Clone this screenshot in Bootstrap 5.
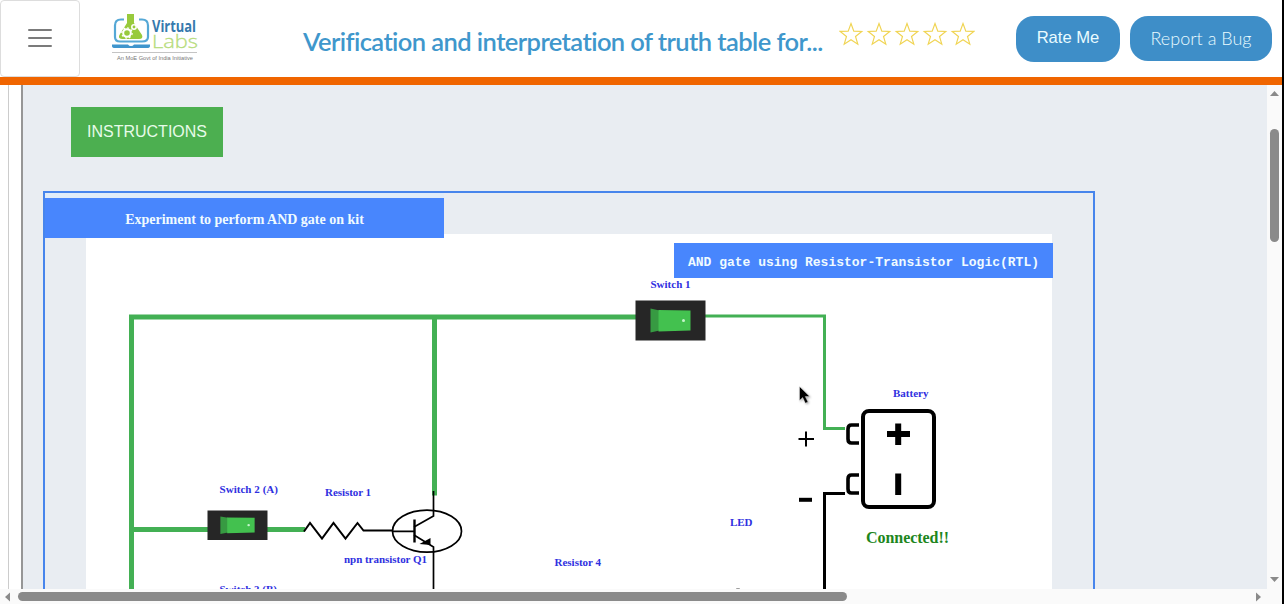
<!DOCTYPE html>
<html lang="en">
<head>
<meta charset="utf-8">
<title>Virtual Labs</title>
<link href="https://cdn.jsdelivr.net/npm/bootstrap@5.3.0/dist/css/bootstrap.min.css" rel="stylesheet">
<style>
body{font-family:"Liberation Sans",Arial,sans-serif;background:#000;height:604px}
.page{width:1282px;height:604px;background:#fff}
.topbar{height:85px;border-bottom:8px solid #f06500}
.menu-btn{width:80px;height:77px;border:1.5px solid #ddd;border-radius:4px;background:#fff}
.logo{width:90px;height:52px;margin-left:30px;margin-top:-2px}
.exp-title{font:600 25.5px "Lato",sans-serif;letter-spacing:-.58px;color:#3f97cc;width:523px;margin-left:103px;margin-top:5px;line-height:32px}
.stars{margin-left:13px;margin-top:-10px}
.pill{background:#3e8ec8;color:#e9fbff;border-radius:18px;font-size:18px;padding:0;border:0}
.pill:hover{background:#3e8ec8;color:#e9fbff}
.rate{width:104px;height:46px;font-size:16.6px;margin-left:41px}
.bug{width:142px;height:45px;margin-left:10px;font-family:"Lato",sans-serif;font-weight:300}
.gutter{width:9px;border-right:1px solid #ccc}
.gutter2{width:14px;border-right:2px solid #969696}
.lab{background:#e9edf2;padding:22px 0 0 20px}
.instr{width:152px;height:50px;margin-left:28px;background:#4caf50;color:#e7fbe9;border:0;border-radius:0;font-size:16px;padding:0}
.kit{width:1052px;height:460px;margin-top:34px;border:2px solid #4785ec}
.strip{height:5px;width:399px;background:#e0ecf9}
.blue-tag{background:#4886fd;color:#f0fbff;font-weight:700}
.exp-tag{width:399px;height:40px;font:700 14px "Liberation Serif",serif;line-height:43px;z-index:1}
.board{width:966px;margin-top:-4px;margin-left:41px}
.rtl-tag{width:379px;height:35px;font:700 13px "Liberation Mono",monospace;line-height:40px;margin-top:9px;margin-right:-1px}
.vbar{width:15px;background:#fafafa}
.hbar{height:15px;background:#fafafa}
.thumb-v{width:9px;height:113px;border-radius:5px;background:#8a8a8a}
.thumb-h{width:829px;height:9px;border-radius:5px;background:#8a8a8a}
</style>
</head>
<body class="overflow-hidden">
<div class="page d-flex flex-column overflow-hidden">
  <header class="topbar d-flex align-items-center flex-shrink-0">
    <button class="menu-btn p-0 flex-shrink-0" aria-label="Menu">
      <svg width="24" height="20" viewBox="0 0 24 20" class="d-block mx-auto" stroke="#7b7b7b" stroke-width="2" stroke-linecap="round"><path d="M1 1h22M1 9h22M1 17h22"/></svg>
    </button>
    <svg class="logo flex-shrink-0" viewBox="110 12 90 52">
      <path d="M124 19.500h-3q-6 0-6 6v11.500q0 4.500 5 4.500h22q6 0 6-4.500v-11.500q0-6-6-6h-3" fill="none" stroke="#55a8d6" stroke-width="2.200"/>
      <path d="M127 14h7v9l8 12q1.500 4-3 4h-17q-5-.5-2-5l7-11z" fill="#98ca3c"/>
      <circle cx="127" cy="33" r="3.800" fill="none" stroke="#fff" stroke-width="2"/>
      <circle cx="127" cy="33" r="5.200" fill="none" stroke="#fff" stroke-width="1.200" stroke-dasharray="2 2"/>
      <circle cx="134" cy="27" r="2.200" fill="none" stroke="#fff" stroke-width="1.500"/>
      <path d="M112 44.500h16q1 1.500 3 1.500t3-1.500h16v1.500q0 2-3 2h-32q-3 0-3-2z" fill="#3f95cd"/>
      <text x="152" y="31.500" font-family="Open Sans,sans-serif" font-size="16" font-weight="700" fill="#3579ad" textLength="44" lengthAdjust="spacingAndGlyphs">Virtual</text>
      <text x="152" y="48" font-family="Open Sans,sans-serif" font-size="19" font-weight="300" fill="#b6dc7b" stroke="#b6dc7b" stroke-width=".3" textLength="46" lengthAdjust="spacingAndGlyphs">Labs</text>
      <path d="M112 52.500h85" stroke="#c4c4c4"/>
      <text x="117" y="59.700" font-family="Liberation Sans,sans-serif" font-size="6" fill="#777" textLength="76" lengthAdjust="spacingAndGlyphs">An MoE Govt of India Initiative</text>
    </svg>
    <h1 class="exp-title mb-0 text-nowrap flex-shrink-0">Verification and interpretation of truth table for...</h1>
    <svg class="stars flex-shrink-0" width="136" height="24" viewBox="839 21 136 24" fill="none" stroke="#f0d452" stroke-width="1.150">
      <defs><path id="star" d="M0-11 2.800-3.400 10.800-3.100 4.500 2 6.800 9.700 0 5.200-6.800 9.700-4.500 2-10.800-3.100-2.800-3.400z"/></defs>
      <use href="#star" x="851" y="33.500"/><use href="#star" x="879" y="33.500"/><use href="#star" x="907" y="33.500"/><use href="#star" x="935" y="33.500"/><use href="#star" x="963" y="33.500"/>
    </svg>
    <button class="btn pill rate flex-shrink-0">Rate Me</button>
    <button class="btn pill bug flex-shrink-0">Report a Bug</button>
  </header>
  <div class="d-flex flex-grow-1 overflow-hidden">
    <div class="gutter flex-shrink-0"></div><div class="gutter2 flex-shrink-0"></div>
    <main class="lab flex-grow-1 overflow-hidden">
      <button class="btn instr d-block">INSTRUCTIONS</button>
      <section class="kit">
        <div class="strip"></div>
        <div class="blue-tag exp-tag text-center position-relative">Experiment to perform AND gate on kit</div>
        <div class="board bg-white d-flex flex-column">
          <div class="blue-tag rtl-tag text-center align-self-end text-nowrap">AND gate using Resistor-Transistor Logic(RTL)</div>
          <svg class="flex-shrink-0" width="966" height="311" viewBox="86 278 966 311">
            <defs>
              <g id="sw"><path fill="#262626" d="M0 0h70v40H0z"/><path fill="#379a42" d="M15 8l9 2v20l-9 2z"/><path fill="#43c14f" d="M23 9.500 55 10v20l-32 1z"/><circle cx="48" cy="20" r="1.500" fill="#c5f5cc"/></g>
            </defs>
            <g fill="none" stroke="#43b054">
              <path d="M131.500 589V317H636M434.500 317V495.500M131.500 529.500H305" stroke-width="5"/>
              <path d="M705 316H824.500V428.500H845" stroke-width="3"/>
            </g>
            <use href="#sw" x="635.500" y="300.500"/>
            <use href="#sw" transform="translate(207.500 510.500) scale(.857 .735)"/>
            <g fill="none" stroke="#000" stroke-width="2">
              <path d="M304 531.500 310 523 322 538.500 333.500 523 345.500 538.500 357.500 523 363.500 530.500H393"/>
              <path d="M392 531.300H414M433.500 491V516L414 527M414 535 433.500 547V589" stroke-width="1.700"/>
              <path d="M414.500 519.500V542.500" stroke-width="2.400"/>
              <ellipse cx="427" cy="531.200" rx="34.500" ry="21" stroke-width="1.700"/>
              <path d="M419.500 544 430.500 538V545z" fill="#000" stroke="none"/>
              <path d="M845 493.500H824.500V589" stroke-width="3"/>
              <rect x="863" y="411" width="71" height="96" rx="6" stroke-width="4"/>
              <path d="M859 425H851.500Q848 425 848 429V439Q848 443 851.500 443H859M859 475H851.500Q848 475 848 479V489Q848 493 851.500 493H859" stroke-width="3.600"/>
              <path d="M887 434H910M898.200 423.500V445M898.200 473.500V495" stroke-width="6"/>
              <path d="M798.500 439H814M806 431.500V446.500" stroke-width="2"/>
              <path d="M799 499.800H812" stroke-width="4"/>
            </g>
            <path d="M736 589q2-.8 4 0" fill="none" stroke="#888"/>
            <g font-family="Liberation Serif,serif" font-weight="700" font-size="11" fill="#3030df">
              <text x="650.500" y="287.500" textLength="40">Switch 1</text>
              <text x="893" y="396.500" textLength="35.500">Battery</text>
              <text x="219.500" y="493" textLength="58.500">Switch 2 (A)</text>
              <text x="325" y="496" textLength="46">Resistor 1</text>
              <text x="344" y="563" textLength="83">npn transistor Q1</text>
              <text x="554.500" y="566" textLength="46.500">Resistor 4</text>
              <text x="730" y="526" textLength="22.500">LED</text>
              <text x="219.500" y="593" textLength="57.500">Switch 3 (B)</text>
              <text x="866" y="543" font-size="16" fill="#1d861d" textLength="83">Connected!!</text>
            </g>
            <path d="M799.500 386.500V400.500l3.200-2.900 2.700 5.600 2.600-1.300-2.700-5.300H809.700z" fill="#000" stroke="#fff" stroke-width=".4" style="filter:drop-shadow(1px 1px 1px #0005)"/>
          </svg>
        </div>
      </section>
    </main>
    <div class="vbar flex-shrink-0 d-flex flex-column align-items-center justify-content-between">
      <div class="d-flex flex-column align-items-center">
        <svg width="9" height="44" viewBox="0 0 9 44" fill="#8a8a8a"><path d="M0 11 4.500 6 9 11z"/></svg>
        <div class="thumb-v"></div>
      </div>
      <svg width="9" height="12" viewBox="0 0 9 12" fill="#8a8a8a"><path d="M0 0h9L4.500 5z"/></svg>
    </div>
  </div>
  <div class="hbar flex-shrink-0 d-flex align-items-center">
    <svg width="18" height="10" viewBox="0 0 18 10" fill="#8a8a8a"><path d="M10 .5V9.500L5 5z"/></svg>
    <div class="thumb-h"></div>
    <svg class="ms-auto me-3" width="15" height="10" viewBox="0 0 15 10" fill="#8a8a8a"><path d="M5 .5V9.500L10 5z"/></svg>
  </div>
</div>
<script src="https://cdn.jsdelivr.net/npm/bootstrap@5.3.0/dist/js/bootstrap.bundle.min.js"></script>
</body>
</html>
